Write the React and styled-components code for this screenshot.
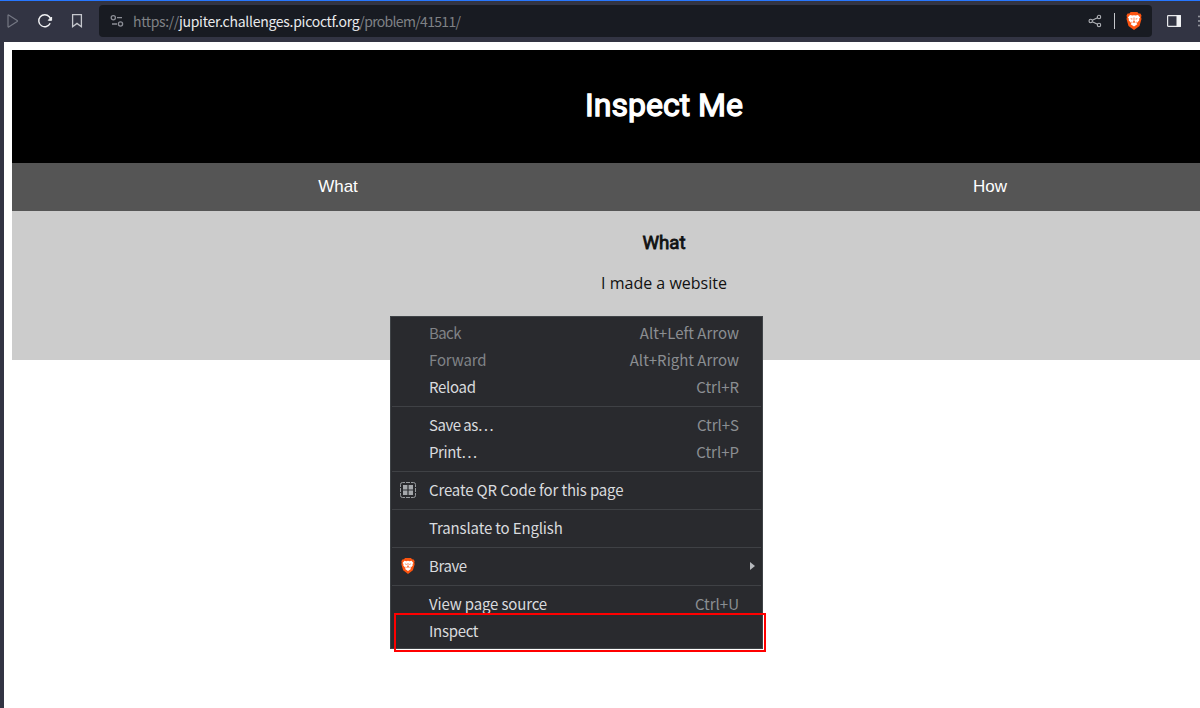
import React from "react";
import styled, { createGlobalStyle } from "styled-components";

const Global = createGlobalStyle`
  * { box-sizing: border-box; }
  html, body { margin: 0; background: #fff; overflow: hidden; }
`;

const Browser = styled.div`
  width: 1200px;
  height: 708px;
  overflow: hidden;
  position: relative;
  display: flex;
  flex-direction: column;
  background: #fff;
  font-family: "Noto Sans CJK SC", "Noto Sans", sans-serif;
`;

const Toolbar = styled.header`
  height: 42px;
  flex: none;
  display: flex;
  align-items: center;
  border-top: 1px solid #2777ff;
  padding: 0 0 1px 4px;
  background: #323443;
`;

const ToolIcon = styled.span`
  display: flex;
  width: 16px;
  height: 16px;
  flex: none;
  margin-right: ${(p) => p.$gap || 0}px;
`;

const AddressBar = styled.div`
  width: 1053px;
  height: 32px;
  flex: none;
  display: flex;
  align-items: center;
  padding: 0 10px;
  margin-right: 14px;
  border-radius: 4px;
  background: #181b22;
`;

const Url = styled.span`
  flex: 1;
  font-size: 14px;
  line-height: 20px;
  white-space: nowrap;
  color: #7f8185;
`;

const Scheme = styled.span`
  letter-spacing: -0.37px;
`;

const Host = styled.span`
  letter-spacing: -0.28px;
  color: #e9eaec;
`;

const Path = styled.span`
  letter-spacing: -0.67px;
`;

const BarDivider = styled.span`
  width: 1px;
  height: 16px;
  margin-right: 11px;
  background: #c4c6ca;
`;

const Viewport = styled.div`
  flex: 1;
  display: flex;
  border-left: 4px solid #323443;
  padding: 8px 0 0 8px;
`;

const Site = styled.main`
  width: 1304px;
  flex: none;
  text-align: center;
`;

const Banner = styled.div`
  height: 113px;
  display: flex;
  align-items: center;
  justify-content: center;
  padding-bottom: 3px;
  background: #000;
`;

const Title = styled.h1`
  margin: 0;
  font: 32px/38px Roboto, sans-serif;
  -webkit-text-stroke: 1.3px #fff;
  color: #fff;
`;

const Tabs = styled.nav`
  display: grid;
  grid-template-columns: 1fr 1fr;
  height: 48px;
`;

const Tab = styled.button`
  border: 0;
  padding: 0;
  background: #555;
  color: #fff;
  font: 17px/20px "Liberation Sans", Arial, sans-serif;
`;

const Panel = styled.section`
  height: 149px;
  padding-top: 21px;
  background: #ccc;
  color: #111;
`;

const Heading = styled.h3`
  margin: 0 0 18px;
  font: 18.72px/22px Roboto, sans-serif;
  -webkit-text-stroke: 0.8px #111;
`;

const Text = styled.p`
  margin: 0;
  font: 16px/22px "Open Sans", sans-serif;
`;

const Menu = styled.div`
  position: absolute;
  left: 390px;
  top: 316px;
  width: 373px;
  padding: 3px 0;
  border: 1px solid #3f4347;
  background: #292a2e;
`;

const MenuRow = styled.div`
  height: 27px;
  display: flex;
  align-items: center;
  padding: 0 23px 2px 9px;
  font-size: 15px;
  line-height: 22px;
  white-space: nowrap;
  color: ${(p) => (p.$disabled ? "#808387" : "#d9dbde")};
`;

const MenuIcon = styled.span`
  display: flex;
  width: 16px;
  height: 16px;
  margin-right: 13px;
`;

const Label = styled.span`
  flex: 1;
  letter-spacing: ${(p) => p.$track ?? -0.15}px;
`;

const Shortcut = styled.span`
  color: #8b8e92;
`;

const Arrow = styled.span`
  margin-right: -16px;
  border-left: 5px solid #b5b8bc;
  border-top: 4px solid transparent;
  border-bottom: 4px solid transparent;
`;

const Separator = styled.div`
  height: 1px;
  margin: 5px 1px;
  background: #3f4145;
`;

const Highlight = styled.div`
  position: absolute;
  left: 394px;
  top: 613px;
  width: 372px;
  height: 39px;
  border: 2px solid #f00;
`;

const Lion = ({ size = 18 }) => (
  <svg width="16" height={size} viewBox="0 0 16 18">
    <path d="M4.7 0h6.6l1.3 1.5 1.8.1 1.1 2-.4 1.6.4 1.7-2 7L8 18l-5.5-4.1-2-7L.9 5.2.5 3.6l1.1-2 1.8-.1z" fill="#fb5410" />
    <path d="M4 3 6.3 3.6 8 3.2l1.7.4 2.3-.6 2.1 2.6-1 1.1.2 1.6-2.6 3 .6 1L8 14.5l-3.3-2.2.6-1-2.6-3 .2-1.6-1-1.1z" fill="#fff" />
    <path d="m4.2 6.3 2.4.5-.6 1zm7.6 0-2.4.5.6 1zM7.6 5.5h.8l-.1 3.6 1 .9L8 10.9 6.7 10l1-.9zM5.5 9.3l1 1.5-.9.5zm5 0-1 1.5.9.5z" fill="#fb5410" />
  </svg>
);

const QrIcon = () => (
  <svg width="16" height="16" viewBox="0 0 16 16" fill="none" stroke="#96999d">
    <path d="M.5 5V2.5q0-2 2-2H5M6 .5h4M11 .5h2.5q2 0 2 2V5M15.5 6v4M15.5 11v2.5q0 2-2 2H11M10 15.5H6M5 15.5H2.5q-2 0-2-2V11M.5 10V6" />
    <path d="M3 3h4.4v4.4H3zM8.6 3H13v4.4H8.6zM3 8.6h4.4V13H3zM8.6 8.6H13V13H8.6z" fill="#a4a7ab" stroke="none" />
  </svg>
);

const groups = [
  [
    { label: "Back", keys: "Alt+Left Arrow", disabled: true, track: -0.6 },
    { label: "Forward", keys: "Alt+Right Arrow", disabled: true },
    { label: "Reload", keys: "Ctrl+R", track: -0.3 },
  ],
  [
    { label: "Save as…", keys: "Ctrl+S", track: -0.5 },
    { label: "Print…", keys: "Ctrl+P", track: -0.4 },
  ],
  [{ label: "Create QR Code for this page", icon: <QrIcon /> }],
  [{ label: "Translate to English" }],
  [{ label: "Brave", icon: <Lion size={16} />, sub: true, track: -0.4 }],
  [{ label: "View page source", keys: "Ctrl+U" }, { label: "Inspect", track: -0.3 }],
];

export default function App() {
  return (
    <Browser>
      <Global />
      <Toolbar>
        <ToolIcon $gap={17}>
          <svg width="16" height="16" viewBox="0 0 16 16" fill="none" stroke="#747783" strokeWidth="1.2">
            <path d="M4 2.4v11.2q0 .7.6.3l8.6-5.4q.6-.5 0-1L4.6 2.1Q4 1.7 4 2.4z" />
          </svg>
        </ToolIcon>
        <ToolIcon $gap={16}>
          <svg width="16" height="16" viewBox="0 0 16 16" fill="none">
            <path d="M13.2 10.3A6 6 0 1 1 12.3 3.8L13.8 6" stroke="#f1f2f4" strokeWidth="1.4" />
            <path d="M14.6 4v3.3h-3.3z" fill="#f1f2f4" stroke="#f1f2f4" strokeLinejoin="round" />
          </svg>
        </ToolIcon>
        <ToolIcon $gap={14}>
          <svg width="16" height="16" viewBox="0 0 16 16" fill="none" stroke="#c5c7cd" strokeWidth="1.3">
            <path d="M3.6 1.6h8.8v12.2L8 10.4l-4.4 3.4z" />
          </svg>
        </ToolIcon>
        <AddressBar>
          <ToolIcon $gap={8}>
            <svg width="16" height="16" viewBox="0 0 16 16" fill="none" stroke="#8c8e96" strokeWidth="1.3">
              <circle cx="4.3" cy="4.7" r="2.1" />
              <circle cx="11.5" cy="11" r="2.1" />
              <path d="M8 4.7h5M3 11h5" />
            </svg>
          </ToolIcon>
          <Url>
            <Scheme>https://</Scheme>
            <Host>jupiter.challenges.picoctf.org</Host>
            <Path>/problem/41511/</Path>
          </Url>
          <ToolIcon $gap={11}>
            <svg width="16" height="16" viewBox="0 0 16 16" fill="none" stroke="#b1b3b8" strokeWidth="1.1">
              <circle cx="3.7" cy="8" r="1.7" />
              <circle cx="12" cy="4" r="1.7" />
              <circle cx="12" cy="12" r="1.7" />
              <path d="m5.3 7.3 5.2-2.5M5.3 8.7l5.2 2.5" />
            </svg>
          </ToolIcon>
          <BarDivider />
          <Lion />
        </AddressBar>
        <ToolIcon $gap={15}>
          <svg width="16" height="16" viewBox="0 0 16 16">
            <rect x="1.6" y="2.6" width="12.8" height="10.8" rx=".7" fill="none" stroke="#e7e8eb" strokeWidth="1.2" />
            <path d="M10.5 2h3.8q.7 0 .7.7v10.6q0 .7-.7.7h-3.8z" fill="#f1f2f4" />
          </svg>
        </ToolIcon>
        <ToolIcon>
          <svg width="4" height="16" viewBox="0 0 4 16" fill="#a0a2a9">
            <circle cx="2" cy="3.5" r="1" />
            <circle cx="2" cy="8" r="1" />
            <circle cx="2" cy="12.5" r="1" />
          </svg>
        </ToolIcon>
      </Toolbar>
      <Viewport>
        <Site>
          <Banner><Title>Inspect Me</Title></Banner>
          <Tabs><Tab>What</Tab><Tab>How</Tab></Tabs>
          <Panel>
            <Heading>What</Heading>
            <Text>I made a website</Text>
          </Panel>
        </Site>
      </Viewport>
      <Menu>
        {groups.map((items, i) => (
          <React.Fragment key={i}>
            {i > 0 && <Separator />}
            {items.map((item) => (
              <MenuRow key={item.label} $disabled={item.disabled}>
                <MenuIcon>{item.icon}</MenuIcon>
                <Label $track={item.track}>{item.label}</Label>
                {item.keys && <Shortcut>{item.keys}</Shortcut>}
                {item.sub && <Arrow />}
              </MenuRow>
            ))}
          </React.Fragment>
        ))}
      </Menu>
      <Highlight />
    </Browser>
  );
}
